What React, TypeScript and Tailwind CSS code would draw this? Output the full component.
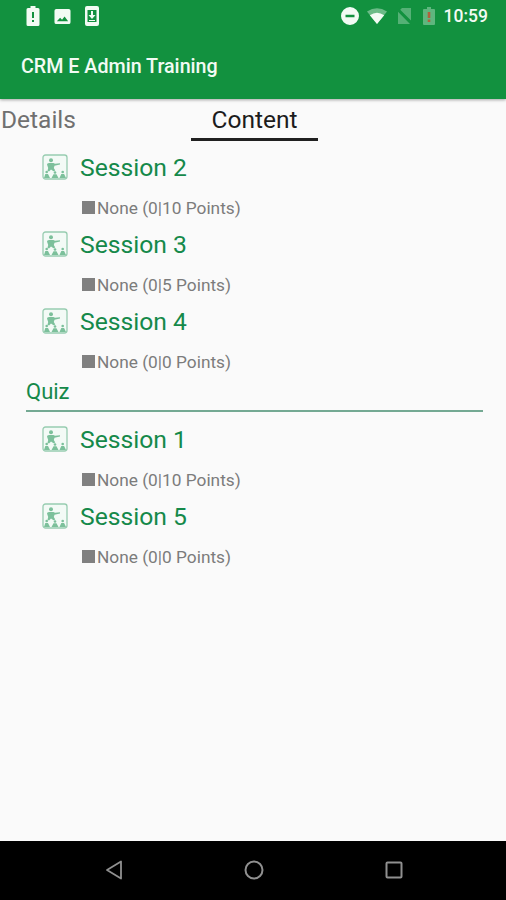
import { ReactNode } from "react";

interface Session {
  title: string;
  earned: number;
  total: number;
}

const trainingSessions: Session[] = [
  { title: "Session 2", earned: 0, total: 10 },
  { title: "Session 3", earned: 0, total: 5 },
  { title: "Session 4", earned: 0, total: 0 },
];

const quizSessions: Session[] = [
  { title: "Session 1", earned: 0, total: 10 },
  { title: "Session 5", earned: 0, total: 0 },
];

const StatusBar = (): ReactNode => (
  <div className="flex h-8 items-center justify-between pl-[26px] pr-[18px] text-[#f2fbf4]">
    <div className="flex items-center gap-[14px]">
      <svg className="h-5 w-[14px]" viewBox="0 0 14 20" fill="currentColor">
        <path fillRule="evenodd" d="M4.500 0h5v2H12q1.500 0 1.500 1.500v15Q13.500 20 12 20H2Q.5 20 .5 18.500v-15Q.5 2 2 2h2.500zM6 6v6h2V6zM6 14v2h2v-2z" />
      </svg>
      <svg className="h-[17px] w-[17px]" viewBox="0 0 18 17" fill="currentColor">
        <path fillRule="evenodd" d="M2.500.500h13Q17.500.500 17.500 2.500v12q0 2-2 2h-13q-2 0-2-2v-12q0-2 2-2zM3 13.500h12L11.200 8.500 8.500 12 6.500 9.700z" />
      </svg>
      <svg className="h-5 w-[14px]" viewBox="0 0 14 20" fill="currentColor">
        <path fillRule="evenodd" d="M2 0h10q2 0 2 2v16q0 2-2 2H2q-2 0-2-2V2q0-2 2-2zM2.500 4v12h9V4zM6 5h2v4h2.500L7 13 3.500 9H6zM4 14h6v1H4z" />
      </svg>
    </div>
    <div className="flex items-center">
      <svg className="h-[18px] w-[18px]" viewBox="0 0 18 18" fill="currentColor">
        <path fillRule="evenodd" d="M9 0a9 9 0 1 1 0 18A9 9 0 1 1 9 0zM4.500 7.700v2.600h9V7.700z" />
      </svg>
      <svg className="ml-2 h-4 w-5" viewBox="0 0 20 16" fill="currentColor">
        <path opacity=".4" d="M0 3.500Q10-3 20 3.500L10 16z" />
        <path d="M2.800 7.200Q10 2.200 17.200 7.200L10 16z" />
      </svg>
      <svg className="ml-[10px] h-[18px] w-[15px]" viewBox="0 0 15 18" fill="currentColor">
        <path opacity=".3" d="M5 1h9v12.500L3.200 2.800zM1 4.800 13 17H1z" />
      </svg>
      <svg className="ml-[11px] h-[18px] w-3" viewBox="0 0 12 18">
        <path fill="currentColor" opacity=".35" d="M4 0h4v2h3q1 0 1 1v14q0 1-1 1H1q-1 0-1-1V3q0-1 1-1h3z" />
        <path fill="#b0603c" d="M4.700 5h2.600v6H4.700zM4.700 12.500h2.600V15H4.700z" />
      </svg>
      <span className="ml-[9px] pt-px text-[17.500px] font-medium leading-none">10:59</span>
    </div>
  </div>
);

const SessionIcon = (): ReactNode => (
  <svg className="mb-[2px] h-[26px] w-[26px]" viewBox="0 0 26 26" fill="#7cc09b">
    <rect x="1" y="1" width="24" height="24" rx="2.500" fill="#f3faf6" stroke="#98cdb1" strokeWidth="1.300" />
    <circle cx="9" cy="6.300" r="2" />
    <path d="M5 10.500q0-1.500 2-1.500h4.500l1.500.8 5-.6v1.200l-5.500 1.300-.7 2.300 1.500 2.500-1.800.8-2.500-1.800L7 17.500l-1.500-.7.7-2.800z" />
    <circle cx="4.700" cy="18" r="1.300" />
    <circle cx="13" cy="18.500" r="1.300" />
    <circle cx="20.700" cy="18" r="1.300" />
    <path d="M2 24 3.300 20H6L8 24zM9.500 24l2-3.700h3l2 3.700zM17.500 24l1.800-4h2.800L24 24z" />
  </svg>
);

const SessionItem = ({ session }: { session: Session }): ReactNode => (
  <div>
    <div className="flex h-11 items-center pl-[42px]">
      <SessionIcon />
      <h3 className="ml-3 pt-px text-[24.700px] leading-none text-[#15894a]">{session.title}</h3>
    </div>
    <div className="flex h-[33px] items-center pl-[82px] pt-[3px] text-[#7c7c7c]">
      <span className="mb-[2px] h-[13px] w-[13px] bg-[#808080]" />
      <span className="ml-[2px] pt-[2px] text-[17.300px] leading-none">
        None ({session.earned}|{session.total} Points)
      </span>
    </div>
  </div>
);

const NavigationBar = (): ReactNode => (
  <nav className="flex h-[59px] items-center bg-black pb-[2px] pl-[105px]">
    <svg className="h-5 w-[18px]" viewBox="0 0 18 20" fill="none" stroke="#909090" strokeWidth="1.800" strokeLinejoin="round">
      <path d="M16 1.500v17L2 10z" />
    </svg>
    <svg className="ml-[121px] h-5 w-5" viewBox="0 0 20 20" fill="none" stroke="#909090" strokeWidth="2">
      <circle cx="10" cy="10" r="8.500" />
    </svg>
    <svg className="ml-[121px] h-[18px] w-[18px]" viewBox="0 0 18 18" fill="none" stroke="#909090" strokeWidth="2">
      <rect x="1.500" y="1.500" width="15" height="15" rx="1" />
    </svg>
  </nav>
);

export default function App() {
  return (
    <div className="flex h-screen flex-col bg-[#fafafa] font-['Roboto',sans-serif]">
      <header className="h-[99px] shrink-0 bg-[#12913f] shadow-[0_1px_3px_rgba(0,0,0,0.35)]">
        <StatusBar />
        <h1 className="flex h-[68px] items-center pl-[21px] pt-[2px] text-[19.700px] font-medium leading-none text-[#f2fbf4]">
          CRM E Admin Training
        </h1>
      </header>
      <div className="flex h-[42px] shrink-0 text-[24.500px] leading-none">
        <div className="flex w-[191px] pl-px pt-[9px] text-[#707070]">Details</div>
        <div className="flex w-[127px] justify-center border-b-[3px] border-[#202020] pt-[9px] text-[#1c1c1c]">
          Content
        </div>
      </div>
      <main className="flex-1 pt-[5px]">
        {trainingSessions.map(session => <SessionItem key={session.title} session={session} />)}
        <h2 className="ml-[26px] mr-[23px] flex h-[35px] items-center border-b-2 border-[#74a993] pb-[3px] text-[22px] leading-none text-[#15894a]">
          Quiz
        </h2>
        <div className="pt-[6px]">
          {quizSessions.map(session => <SessionItem key={session.title} session={session} />)}
        </div>
      </main>
      <NavigationBar />
    </div>
  );
}
